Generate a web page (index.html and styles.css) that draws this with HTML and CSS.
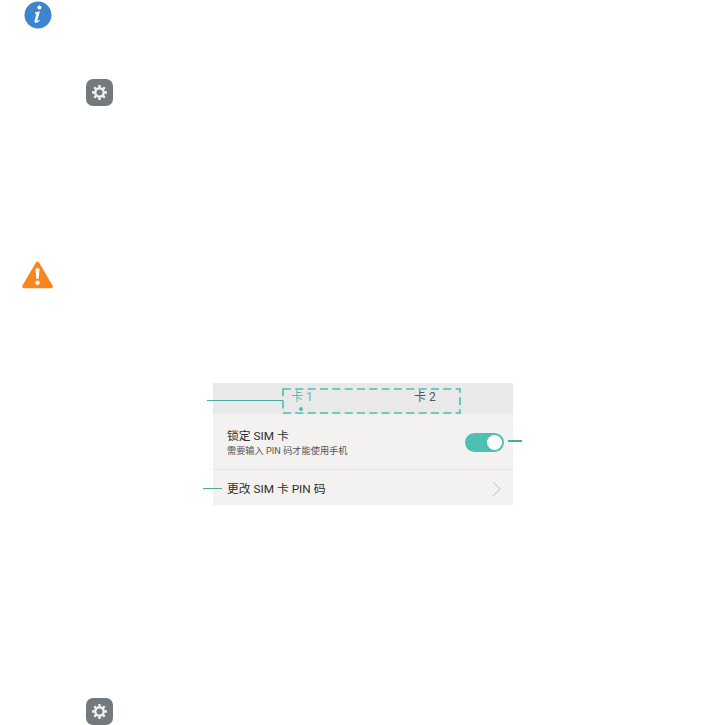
FILE: index.html
```html
<!DOCTYPE html>
<html lang="en">
<head>
<meta charset="UTF-8">
<meta name="viewport" content="width=device-width, initial-scale=1.0">
<title>SIM PIN</title>
<link rel="stylesheet" href="styles.css">
</head>
<body>
<div class="page">
    <svg class="info-icon" viewBox="0 0 28 28">
        <circle cx="14" cy="14" r="13.5" fill="#3d85cf"/>
        <circle cx="15.4" cy="6.4" r="2" fill="#fff"/>
        <path d="M11 11.4 L15.9 10.2 L13.4 19 Q13.1 20.3 14.2 19.8 L15.8 18.7 L16.2 19.3 Q13.9 21.8 11.8 21.8 Q10.1 21.8 10.6 19.7 L12.4 12.9 L10.9 12.5 Z" fill="#fff"/>
    </svg>

    <div class="gear-tile gear-top">
        <svg class="gear" viewBox="0 0 24 24">
            <circle cx="12" cy="12" r="6" fill="none" stroke="#f1f2f2" stroke-width="3.4"/>
            <path d="M12 1.5V5M12 19v3.5M1.5 12H5M19 12h3.5M4.6 4.6l2.5 2.5M16.9 16.9l2.5 2.5M19.4 4.6l-2.5 2.5M7.1 16.9l-2.5 2.5" stroke="#f1f2f2" stroke-width="3.4"/>
        </svg>
    </div>

    <svg class="warn-icon" viewBox="0 0 31 28">
        <path d="M15.5 2.5 L29 25.5 H2 Z" fill="#f7861e" stroke="#f7861e" stroke-width="3.6" stroke-linejoin="round"/>
        <path d="M13.4 7.8 Q15.5 6.6 17.6 7.8 L16.6 18 H14.4 Z" fill="#fff"/>
        <circle cx="15.5" cy="21.8" r="2.2" fill="#fff"/>
    </svg>

    <div class="screen">
        <div class="tabs">
            <div class="tab tab-active">卡 1<span class="tab-dot"></span></div>
            <div class="tab">卡 2</div>
        </div>
        <div class="row row-lock">
            <div>
                <div class="row-title">锁定 SIM 卡</div>
                <div class="row-sub">需要输入 PIN 码才能使用手机</div>
            </div>
            <div class="switch"><span class="knob"></span></div>
        </div>
        <div class="row row-change">
            <div class="row-title">更改 SIM 卡 PIN 码</div>
            <svg class="chevron" viewBox="0 0 9 16">
                <path d="M1 1 L8 8 L1 15" fill="none" stroke="#c4c4c4" stroke-width="1"/>
            </svg>
        </div>

        <!-- callouts drawn over the screenshot -->
        <svg class="dash-box" viewBox="0 0 180 26">
            <rect x="1" y="1" width="178" height="24" fill="none" stroke="#4dbdae" stroke-width="1.6" stroke-dasharray="8 4.4"/>
        </svg>
        <div class="leader leader-tabs"></div>
        <div class="leader leader-change"></div>
        <div class="leader leader-switch"></div>
    </div>

    <div class="gear-tile gear-bottom">
        <svg class="gear" viewBox="0 0 24 24">
            <circle cx="12" cy="12" r="6" fill="none" stroke="#f1f2f2" stroke-width="3.4"/>
            <path d="M12 1.5V5M12 19v3.5M1.5 12H5M19 12h3.5M4.6 4.6l2.5 2.5M16.9 16.9l2.5 2.5M19.4 4.6l-2.5 2.5M7.1 16.9l-2.5 2.5" stroke="#f1f2f2" stroke-width="3.4"/>
        </svg>
    </div>
</div>
</body>
</html>
```

FILE: styles.css
```css
html, body {
    margin: 0;
    background-color: #fff;
}

body {
    font-family: Roboto, "Noto Sans CJK SC", sans-serif;
    color: #333;
}

.page {
    display: flex;
    flex-direction: column;
    align-items: flex-start;
    height: 725px;
    overflow: hidden;
}

.info-icon {
    display: block;
    width: 28px;
    height: 28px;
    margin: 1px 0 0 24px;
}

.gear-tile {
    display: flex;
    align-items: center;
    justify-content: center;
    width: 27px;
    height: 27px;
    margin-left: 86px;
    border-radius: 7px;
    background-color: #74797d;
}

.gear-top {
    margin-top: 50px;
}

.gear-bottom {
    margin-top: 193px;
}

.gear {
    width: 17px;
    height: 17px;
}

.warn-icon {
    display: block;
    width: 31px;
    height: 28px;
    margin: 155px 0 0 22px;
}

.screen {
    position: relative;
    width: 300px;
    margin: 94px 0 0 213px;
    background-color: #f3f2f0;
}

.tabs {
    display: flex;
    gap: 0;
    height: 32px;
    background-color: #e9e9e9;
    border-bottom: 1px solid #eeeeec;
    box-sizing: border-box;
    padding: 6px 0 0 78px;
}

.tab {
    position: relative;
    flex: none;
    width: 123px;
    font-size: 12px;
    line-height: 16px;
    color: #555;
}

.tab-active {
    color: #57bdb0;
}

.tab-dot {
    position: absolute;
    left: 8px;
    top: 18px;
    width: 4px;
    height: 4px;
    border-radius: 50%;
    background-color: #4dbdae;
}

.row {
    display: flex;
    align-items: center;
    justify-content: space-between;
    box-sizing: border-box;
    padding: 0 9px 0 14px;
}

.row-lock {
    height: 55px;
    border-bottom: 1px solid #e6e6e4;
    padding-top: 1px;
}

.row-change {
    height: 35px;
    padding-top: 2px;
}

.row-title {
    font-size: 11.8px;
    line-height: 16px;
    color: #2e2e2e;
}

.row-sub {
    font-size: 9.2px;
    line-height: 12px;
    margin-top: 1px;
    color: #555;
}

.switch {
    position: relative;
    width: 39px;
    height: 19px;
    border-radius: 10px;
    background-color: #4fbfb1;
}

.knob {
    position: absolute;
    right: 2px;
    top: 2px;
    width: 15px;
    height: 15px;
    border-radius: 50%;
    background-color: #fff;
}

.chevron {
    width: 9px;
    height: 16px;
    margin-right: 3px;
}

.dash-box {
    position: absolute;
    left: 69px;
    top: 5px;
    width: 179px;
    height: 26px;
}

.leader {
    position: absolute;
    height: 1.5px;
    background-color: #4aa9a0;
}

.leader-tabs {
    left: -6px;
    top: 16.5px;
    width: 76px;
}

.leader-change {
    left: -10px;
    top: 104.5px;
    width: 19px;
}

.leader-switch {
    left: 295px;
    top: 57px;
    width: 14px;
    height: 2px;
}
```
